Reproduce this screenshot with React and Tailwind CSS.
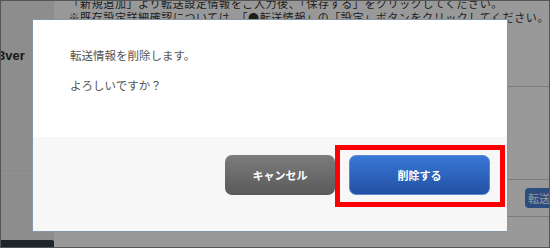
import React from "react";

// Delete confirmation dialog over the transfer settings page
function BackgroundPage() {
  return (
    <div className="flex h-full">
      {/* sidebar */}
      <aside className="w-[62px] bg-[#ececec] flex flex-col">
        <div className="h-[48px]" />
        <div className="-ml-[3px] text-[13px] font-semibold leading-[14px] text-[#2a2a2a] font-['Liberation_Sans',sans-serif]">
          3ver
        </div>
        <div className="h-[111px] border-b border-[#f4f4f4]" />
        <div className="flex-1" />
        <div className="h-[7px] bg-[#333e48] rounded-tr-[2px]" />
      </aside>

      {/* main content */}
      <main className="flex-1 flex flex-col">
        <div className="pl-[15px] -mt-[5px] text-[11px] leading-[14px] tracking-[0.6px] text-[#333] whitespace-nowrap">
          <p>「新規追加」より転送設定情報をご入力後、「保存する」をクリックしてください。</p>
          <p>※既存設定詳細確認については、「●転送情報」の「設定」ボタンをクリックしてください。</p>
        </div>
        <div className="h-[63px] border-b border-[#cfcfcf]" />
        <div className="h-[93px] border-b border-[#cfcfcf]" />
        <div className="h-[37px] border-b border-[#cfcfcf] flex items-center justify-end">
          <div className="w-[28px] h-[20px] -mr-[4px] rounded-l-[4px] bg-[#4a7fd4] text-white text-[11px] leading-[20px] pl-[3px] overflow-hidden whitespace-nowrap">
            転送
          </div>
        </div>
      </main>
    </div>
  );
}

export default function App() {
  return (
    <div className="relative w-[550px] h-[248px] overflow-hidden border border-[#555] bg-white font-['Noto_Sans_CJK_JP',sans-serif]">
      <BackgroundPage />

      {/* overlay */}
      <div className="absolute inset-0 bg-black/40" />

      {/* dialog */}
      <div className="absolute inset-0 pt-[18px] pl-[31px]">
        <div className="w-[476px] border border-[#8796a2] bg-white">
          <div className="h-[117px] pl-[37px] pt-[27px] text-[11.5px] leading-[16px] text-[#555]">
            <p>転送情報を削除します。</p>
            <p className="mt-[14px]">よろしいですか？</p>
          </div>
          <div className="h-[94px] bg-[#f7f7f7] flex justify-end items-start gap-[14px] pt-[18px] pr-[17px]">
            <button className="w-[110px] h-[40px] rounded-[7px] bg-gradient-to-b from-[#7c7c7c] to-[#5a5a5a] text-white text-[11px] font-bold">
              キャンセル
            </button>
            <button className="w-[141px] h-[40px] rounded-[7px] border border-[#5d88d2] bg-gradient-to-b from-[#3878d6] to-[#2350a4] text-white text-[11px] font-bold">
              削除する
            </button>
          </div>
        </div>
      </div>

      {/* red highlight annotation */}
      <div className="absolute left-[334px] top-[144px] w-[170px] h-[62px] border-[5px] border-[#ff0000]" />
    </div>
  );
}
